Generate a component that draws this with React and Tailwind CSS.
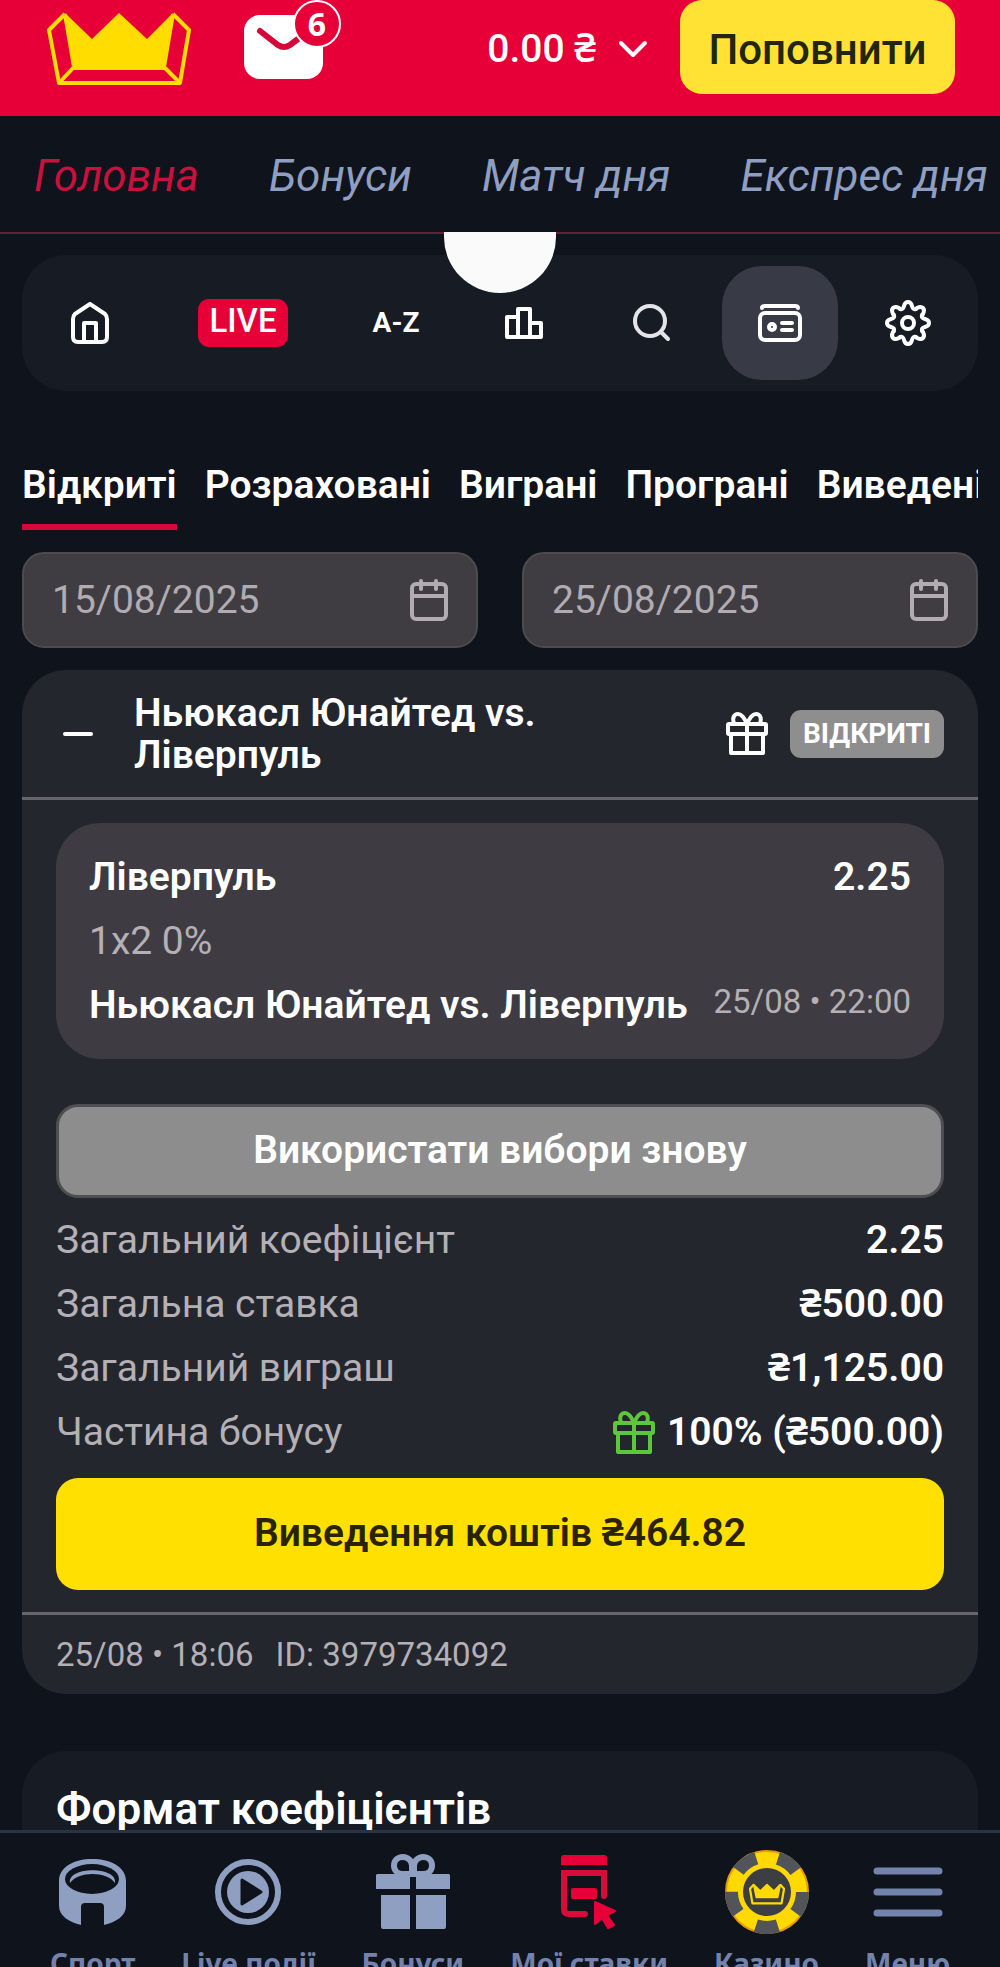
import { useState } from "react";

function Crown({ className }) {
  return (
    <svg viewBox="0 0 146 75" className={className} fill="none" stroke="#ffdd00" strokeLinejoin="round">
      <path d="M19 2 L46 28 L73 2 L101 28 L127 2 L118 57 H28 Z" fill="#ffdd00" stroke="none" />
      <path d="M19 3 L3 19 L13 72 H134 L143 19 L127 3" strokeWidth="4" />
      <path d="M19 3 L28 56 L13 72 M127 3 L118 56 L134 72 M28 57 H118" strokeWidth="4" />
    </svg>
  );
}

function Gift({ className }) {
  return (
    <svg viewBox="0 0 42 43" className={className} fill="none" stroke="currentColor" strokeWidth="4" strokeLinejoin="round">
      <rect x="2" y="12" width="38" height="10" rx="1" />
      <path d="M5 22 V41 H37 V22 M21 12 V41" />
      <path d="M21 12 C18 5 15 2 12 2 C8 2 6 6 8 11 M21 12 C24 5 27 2 30 2 C34 2 36 6 34 11" />
    </svg>
  );
}

function Calendar() {
  return (
    <svg viewBox="0 0 38 42" className="h-[42px] w-[38px] shrink-0 text-[#b0acb2]" fill="none" stroke="currentColor" strokeWidth="4">
      <rect x="2" y="5" width="34" height="35" rx="4" />
      <path d="M2 17 H36" />
      <path d="M11 2 V10 M26 2 V10" strokeLinecap="round" />
    </svg>
  );
}

function HomeIcon() {
  return (
    <svg viewBox="0 0 38 42" className="h-[42px] w-[38px]" fill="none" stroke="currentColor" strokeWidth="4" strokeLinejoin="round">
      <path d="M2 17 Q2 14 4 12 L19 2 L34 12 Q36 14 36 17 V35 Q36 40 31 40 H7 Q2 40 2 35 Z" />
      <path d="M13 40 V21 H25 V40" />
    </svg>
  );
}

function PodiumIcon() {
  return (
    <svg viewBox="0 0 38 32" className="h-8 w-[38px]" fill="none" stroke="currentColor" strokeWidth="4" strokeLinejoin="round">
      <path d="M2 30 V10 H13 V30 Z M13 30 V2 H25 V30 Z M25 30 V16 H36 V30 Z" />
    </svg>
  );
}

function SearchIcon() {
  return (
    <svg viewBox="0 0 38 38" className="h-[38px] w-[38px] text-[#e4e5e8]" fill="none" stroke="currentColor" strokeWidth="4" strokeLinecap="round">
      <circle cx="17" cy="17" r="15" />
      <path d="M28 28 L35 35" />
    </svg>
  );
}

function BetsIcon() {
  return (
    <svg viewBox="0 0 44 38" className="h-[38px] w-11" fill="none" stroke="currentColor" strokeWidth="4" strokeLinecap="round" strokeLinejoin="round">
      <path d="M4 4 Q4 2 7 2 H37 Q40 2 40 4" />
      <rect x="2" y="9" width="40" height="27" rx="5" />
      <circle cx="14" cy="23" r="3" />
      <path d="M24 19 H34 M24 26 H34" />
    </svg>
  );
}

function GearIcon() {
  return (
    <svg viewBox="0 0 46 46" className="h-[46px] w-[46px]" fill="none" stroke="currentColor" strokeWidth="4" strokeLinejoin="round">
      <path d="M19 6 Q20 2 23 2 Q26 2 27 6 Q28 10 31 9 L32 8 Q36 6 38 8 Q40 10 38 14 L37 15 Q36 18 40 19 Q44 20 44 23 Q44 26 40 27 Q36 28 37 31 L38 32 Q40 36 38 38 Q36 40 32 38 L31 37 Q28 36 27 40 Q26 44 23 44 Q20 44 19 40 Q18 36 15 37 L14 38 Q10 40 8 38 Q6 36 8 32 L9 31 Q10 28 6 27 Q2 26 2 23 Q2 20 6 19 Q10 18 9 15 L8 14 Q6 10 8 8 Q10 6 14 8 L15 9 Q18 10 19 6 Z" />
      <circle cx="23" cy="23" r="6" />
    </svg>
  );
}

function SportIcon() {
  return (
    <svg viewBox="0 0 67 66" className="h-[66px] w-[67px]">
      <path d="M0 22 C0 8 15 0 33 0 C52 0 67 8 67 22 V47 C67 57 57 63 45 66 V48 Q45 44 41 44 H26 Q22 44 22 48 V66 C10 63 0 57 0 47 Z" fill="#8f9fc2" />
      <ellipse cx="33" cy="20" rx="27" ry="15" fill="#0f131b" />
      <path d="M11 24 C8 7 59 7 56 24 C48 12 19 12 11 24 Z" fill="#8f9fc2" />
    </svg>
  );
}

function LiveIcon() {
  return (
    <svg viewBox="0 0 68 68" className="h-[68px] w-[68px]">
      <circle cx="34" cy="34" r="30" fill="none" stroke="#8f9fc2" strokeWidth="6" />
      <circle cx="34" cy="34" r="21" fill="#8f9fc2" />
      <path d="M28 22 L47 34 L28 46 Z" fill="#0f131b" stroke="#0f131b" strokeWidth="3" strokeLinejoin="round" />
    </svg>
  );
}

function BonusIcon() {
  return (
    <svg viewBox="0 0 74 76" className="h-[76px] w-[74px]" fill="#8f9fc2">
      <path d="M1 20 H34 V35 H0 V21 Z M40 20 H73 L74 21 V35 H40 Z M5 41 H34 V75 H7 Q5 75 5 73 Z M40 41 H70 V73 Q70 75 68 75 H40 Z" />
      <path d="M36 20 V12 C36 7 32 3 27 3 C15 3 15 20 27 20 Z M38 20 V12 C38 7 42 3 47 3 C59 3 59 20 47 20 Z" fill="none" stroke="#8f9fc2" strokeWidth="6" />
    </svg>
  );
}

function MyBetsIcon() {
  return (
    <svg viewBox="0 0 56 76" className="h-[76px] w-[56px]" fill="#e60037">
      <path d="M0 11 V4 Q0 1 3 1 H43 Q46 1 46 4 V11 Z" />
      <path d="M43 42 V19 H3 V55 Q3 60 8 60 H24" fill="none" stroke="#d80c3b" strokeWidth="6" strokeLinecap="round" />
      <rect x="10" y="34" width="26" height="11" rx="2" />
      <path d="M34 48 L54 57 L46 61 L53 71 L47 74 L41 64 L34 70 Z" stroke="#e60037" strokeWidth="2" strokeLinejoin="round" />
    </svg>
  );
}

function CasinoIcon() {
  return (
    <svg viewBox="0 0 84 84" className="h-[84px] w-[84px]">
      <circle cx="42" cy="42" r="41" fill="#ffd900" stroke="#e59a10" strokeWidth="2" />
      <circle cx="42" cy="42" r="35.5" fill="none" stroke="#515458" strokeWidth="13" strokeDasharray="22.3 22.3" transform="rotate(-72 42 42)" />
      <circle cx="42" cy="42" r="24" fill="#3c3e42" />
      <svg x="24" y="33" width="36" height="22" viewBox="0 0 146 88" fill="none" stroke="#ffd900" strokeWidth="7" strokeLinejoin="round">
        <path d="M19 6 L46 32 L73 6 L101 32 L127 6 L116 58 H30 Z" fill="#ffd900" />
        <path d="M19 6 L4 23 L14 82 H132 L142 23 L127 6" strokeWidth="9" />
      </svg>
    </svg>
  );
}

function MenuIcon() {
  return (
    <svg viewBox="0 0 70 50" className="h-[50px] w-[70px]" stroke="#7383ad" strokeWidth="7" strokeLinecap="round">
      <path d="M4 4 H66 M4 25 H66 M4 46 H66" />
    </svg>
  );
}

const links = ["Головна", "Бонуси", "Матч дня", "Експрес дня"];

const filters = ["Відкриті", "Розраховані", "Виграні", "Програні", "Виведені"];

const tools = [
  { label: "Головна", icon: <HomeIcon /> },
  { label: "Live", live: true },
  { label: "A-Z", icon: <span className="text-[28px] font-bold">A-Z</span> },
  { label: "Результати", icon: <PodiumIcon /> },
  { label: "Пошук", icon: <SearchIcon /> },
  { label: "Мої ставки", icon: <BetsIcon />, active: true },
  { label: "Налаштування", icon: <GearIcon /> },
];

const totals = [
  { label: "Загальний коефіцієнт", value: "2.25" },
  { label: "Загальна ставка", value: "₴500.00" },
  { label: "Загальний виграш", value: "₴1,125.00" },
  { label: "Частина бонусу", value: "100% (₴500.00)", gift: true },
];

const bottomLinks = [
  { label: "Спорт", icon: <SportIcon /> },
  { label: "Live події", icon: <LiveIcon /> },
  { label: "Бонуси", icon: <BonusIcon /> },
  { label: "Мої ставки", icon: <MyBetsIcon /> },
  { label: "Казино", icon: <CasinoIcon /> },
  { label: "Меню", icon: <MenuIcon /> },
];

function DateField({ label, value, onChange }) {
  return (
    <label className="flex h-24 min-w-0 flex-1 items-center rounded-[22px] border-2 border-[#4c4c4e] bg-[#403d42] px-7">
      <input
        type="text"
        aria-label={label}
        value={value}
        onChange={(e) => onChange(e.target.value)}
        className="min-w-0 flex-1 bg-transparent text-[39px] text-[#b0acb2] outline-none"
      />
      <Calendar />
    </label>
  );
}

export default function App() {
  const [filter, setFilter] = useState("Відкриті");
  const [from, setFrom] = useState("15/08/2025");
  const [to, setTo] = useState("25/08/2025");

  return (
    <div className="flex h-screen flex-col bg-[#0f131b] font-['Roboto','Noto_Sans',sans-serif] text-[39px] text-white">
      <header className="flex h-[116px] shrink-0 items-start bg-[#e60037] pr-[45px] pl-[46px]">
        <a href="#" aria-label="Головна" className="mt-[11px]">
          <Crown className="h-[75px] w-[146px]" />
        </a>
        <button aria-label="Повідомлення" className="relative mt-[15px] ml-[52px]">
          <svg viewBox="0 0 80 64" className="h-16 w-20">
            <rect width="79" height="64" rx="16" fill="#fff" />
            <path d="M16 16 L34 30 Q40 34 46 30 L62 18" fill="none" stroke="#d4093a" strokeWidth="6" strokeLinecap="round" />
          </svg>
          <span className="absolute -top-[15px] left-[49px] flex h-12 w-12 items-center justify-center rounded-full border-2 border-white bg-[#e60037] font-['Noto_Sans',sans-serif] text-[32px] leading-none font-bold">
            6
          </span>
        </button>
        <button className="ml-auto flex h-[94px] items-center gap-[22px] pt-1 font-medium">
          0.00 ₴
          <svg viewBox="0 0 30 18" className="h-[18px] w-[30px]" fill="none" stroke="currentColor" strokeWidth="4" strokeLinecap="round" strokeLinejoin="round">
            <path d="M3 3 L15 15 L27 3" />
          </svg>
        </button>
        <button className="ml-8 h-[94px] w-[275px] rounded-[22px] bg-[#ffe233] pt-1 text-[42px] font-medium text-[#22260f]">
          Поповнити
        </button>
      </header>

      <nav className="relative z-10 flex h-[118px] shrink-0 items-center gap-[70px] border-b-2 border-[#6b1d36] pt-1 pl-[34px] text-[44px] whitespace-nowrap text-[#8f9fc2] italic">
        {links.map((link, index) => (
          <a key={link} href="#" className={index === 0 ? "text-[#c9103f]" : ""}>{link}</a>
        ))}
        {/* pull to refresh handle */}
        <div className="absolute top-full left-1/2 h-[61px] w-28 -translate-x-1/2 rounded-b-[56px] bg-[#fafafa]" />
      </nav>

      <main className="min-h-0 flex-1 overflow-y-auto px-[22px] pt-[21px] [scrollbar-width:none]">
        <div className="flex h-[136px] items-center gap-3 rounded-[44px] bg-[#171b24] pr-3 pl-[10px]">
          {tools.map((tool) =>
            tool.live ? (
              <button key={tool.label} className="flex flex-1 justify-center">
                <span className="flex h-12 w-[90px] items-center justify-center rounded-[11px] bg-[#e60037] pb-1 text-[33px] font-medium">LIVE</span>
              </button>
            ) : (
              <button
                key={tool.label}
                aria-label={tool.label}
                className={`flex h-[114px] w-[116px] items-center justify-center rounded-[40px] ${tool.active ? "bg-[#383b45]" : ""}`}
              >
                {tool.icon}
              </button>
            )
          )}
        </div>

        <div className="mt-[71px] flex gap-7 overflow-hidden font-semibold">
          {filters.map((name) => (
            <button
              key={name}
              onClick={() => setFilter(name)}
              className={`shrink-0 border-b-[6px] pb-[15px] leading-[47px] ${name === filter ? "border-[#d8063a]" : "border-transparent"}`}
            >
              {name}
            </button>
          ))}
        </div>

        <div className="mt-[22px] flex gap-11">
          <DateField label="Від" value={from} onChange={setFrom} />
          <DateField label="До" value={to} onChange={setTo} />
        </div>

        <section className="mt-[22px] rounded-[44px] bg-[#24262e]">
          <div className="flex h-[130px] items-center border-b-[3px] border-[#65666b] pr-[34px] pl-[41px]">
            <button aria-label="Згорнути">
              <svg viewBox="0 0 30 6" className="h-[6px] w-[30px]" stroke="currentColor" strokeWidth="4" strokeLinecap="round">
                <path d="M2 3 H28" />
              </svg>
            </button>
            <h2 className="ml-[41px] w-[440px] leading-[42px] font-semibold">Ньюкасл Юнайтед vs. Ліверпуль</h2>
            <Gift className="ml-auto h-[43px] w-[42px]" />
            <span className="ml-[22px] flex h-12 w-[154px] items-center justify-center rounded-[11px] bg-[#8e8e8e] text-[28px] font-bold">ВІДКРИТІ</span>
          </div>

          <div className="px-[34px] pt-[23px] pb-[22px]">
            <div className="rounded-[44px] bg-[#3e3c42] px-[33px] pt-[22px] pb-[22px] leading-[64px]">
              <div className="flex justify-between font-semibold">
                <span>Ліверпуль</span>
                <span>2.25</span>
              </div>
              <div className="text-[#b4b0b6]">1x2 0%</div>
              <div className="flex items-start justify-between">
                <span className="font-semibold">Ньюкасл Юнайтед vs. Ліверпуль</span>
                <span className="text-[33px] leading-[58px] text-[#b4b0b6]">25/08 • 22:00</span>
              </div>
            </div>

            <button className="mt-[45px] h-[94px] w-full rounded-[22px] border-[3px] border-[#4f4f51] bg-[#8d8d8d] pb-[2px] font-semibold">
              Використати вибори знову
            </button>

            <dl className="mt-[10px] leading-[64px]">
              {totals.map((row) => (
                <div key={row.label} className="flex justify-between">
                  <dt className="text-[#b4b0b6]">{row.label}</dt>
                  <dd className="flex items-center gap-3 font-semibold">
                    {row.gift && <Gift className="h-[43px] w-[42px] text-[#5ec63a]" />}
                    {row.value}
                  </dd>
                </div>
              ))}
            </dl>

            <button className="mt-[14px] h-28 w-full rounded-[22px] bg-[#ffe000] pb-[2px] font-semibold text-[#2a2300]">
              Виведення коштів ₴464.82
            </button>
          </div>

          <div className="flex h-[82px] items-center gap-[22px] border-t-[3px] border-[#65666b] px-[34px] text-[33px] text-[#b4b0b6]">
            <span>25/08 • 18:06</span>
            <span>ID: 3979734092</span>
          </div>
        </section>

        <section className="mt-[57px] rounded-[44px] bg-[#171b24] px-[34px] pt-7 pb-11">
          <h2 className="text-[44px] leading-[60px] font-semibold">Формат коефіцієнтів</h2>
        </section>
      </main>

      <nav className="flex h-[137px] shrink-0 justify-between overflow-hidden border-t-[3px] border-[#2a3343] px-[50px] font-['Noto_Sans',sans-serif] text-[28px] font-bold text-[#7383ad]">
        {bottomLinks.map((item) => (
          <a key={item.label} href="#" className="flex shrink-0 flex-col items-center whitespace-nowrap">
            <span className="flex h-[118px] shrink-0 items-center">{item.icon}</span>
            <span className="-mt-1 leading-8">{item.label}</span>
          </a>
        ))}
      </nav>
    </div>
  );
}
